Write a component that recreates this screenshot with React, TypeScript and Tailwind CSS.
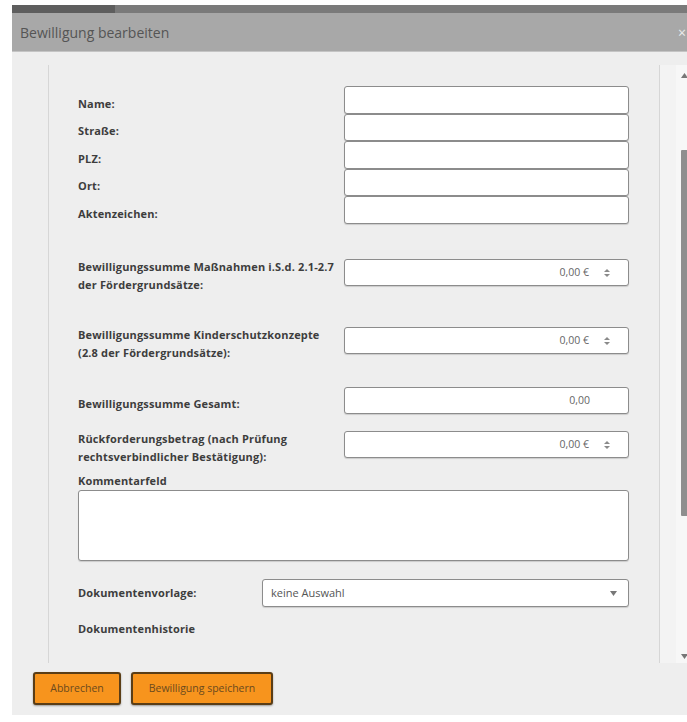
import { ReactNode } from "react";

function Spinner() {
  return (
    <svg width="8" height="12" viewBox="0 0 8 12" className="shrink-0">
      <path d="M1 5 L4 2 L7 5 Z" fill="#8a8a8a" />
      <path d="M1 7 L4 10 L7 7 Z" fill="#8a8a8a" />
    </svg>
  );
}

function TextInput({ h = "h-[28px]" }: { h?: string }) {
  return <div className={`w-[285px] ${h} bg-white border border-[#8c8c8c] rounded-[3px] shadow-[0_1px_1px_rgba(0,0,0,0.15)]`} />;
}

function MoneyInput({ value, spinner = true }: { value: string; spinner?: boolean }) {
  return (
    <div className="w-[285px] h-[27px] bg-white border border-[#8c8c8c] rounded-[3px] shadow-[0_1px_1px_rgba(0,0,0,0.15)] flex items-center justify-end pr-[17px] gap-[14px]">
      <span className={`text-[10.5px] text-[#666] ${spinner ? "" : "mr-[21px]"}`}>{value}</span>
      {spinner && <Spinner />}
    </div>
  );
}

function Row({ label, children, className = "" }: { label: ReactNode; children: ReactNode; className?: string }) {
  return (
    <div className={`flex items-center ${className}`}>
      <div className="w-[266px] pt-[7px] text-[11px] leading-[18px] font-bold tracking-[0.15px] text-[#3d3d3d]">{label}</div>
      {children}
    </div>
  );
}

export default function App() {
  return (
    <div className="w-[687px] h-[722px] bg-white overflow-hidden pt-[5px] pl-[12px] font-['Open_Sans',sans-serif]">
      <div className="w-[682px] h-[710px] flex flex-col bg-[#eeeeee]">
        {/* top strip */}
        <div className="h-[8px] flex shrink-0">
          <div className="w-[103px] bg-[#5e5e5e]" />
          <div className="flex-1 bg-[#7a7a7a]" />
        </div>
        {/* title bar */}
        <div className="h-[39px] shrink-0 bg-[#a8a8a8] border-b border-[#c4c4c4] flex items-center justify-between pl-[8px] pr-[8px]">
          <span className="text-[14px] text-[#555]">Bewilligung bearbeiten</span>
          <span className="text-[14px] text-[#ececec]">×</span>
        </div>

        {/* body */}
        <div className="flex pt-[13px] h-[611px] shrink-0">
          <div className="w-[36px] shrink-0" />
          <div className="w-[612px] shrink-0 border-l border-r border-[#d6d6d6] pl-[29px] pt-[21px] overflow-hidden">
            <div className="flex flex-col">
              <Row label="Name:">
                <TextInput />
              </Row>
              <Row label="Straße:">
                <TextInput h="h-[27px]" />
              </Row>
              <Row label="PLZ:">
                <TextInput />
              </Row>
              <Row label="Ort:">
                <TextInput h="h-[27px]" />
              </Row>
              <Row label="Aktenzeichen:">
                <TextInput />
              </Row>
            </div>

            <Row className="mt-[27px]" label={<>Bewilligungssumme Maßnahmen i.S.d. 2.1-2.7<br />der Fördergrundsätze:</>}>
              <MoneyInput value="0,00 €" />
            </Row>
            <Row className="mt-[25px]" label={<>Bewilligungssumme Kinderschutzkonzepte<br />(2.8 der Fördergrundsätze):</>}>
              <MoneyInput value="0,00 €" />
            </Row>
            <Row className="mt-[25px]" label="Bewilligungssumme Gesamt:">
              <MoneyInput value="0,00" spinner={false} />
            </Row>
            <Row className="mt-[9px]" label={<>Rückforderungsbetrag (nach Prüfung<br />rechtsverbindlicher Bestätigung):</>}>
              <MoneyInput value="0,00 €" />
            </Row>

            <div className="mt-[8px] text-[11px] leading-[14px] font-bold tracking-[0.15px] text-[#3d3d3d]">Kommentarfeld</div>
            <div className="mt-[2px] w-[551px] h-[71px] bg-white border border-[#8c8c8c] rounded-[3px] shadow-[0_1px_1px_rgba(0,0,0,0.15)]" />

            <div className="mt-[18px] flex items-center">
              <div className="w-[184px] text-[11px] font-bold tracking-[0.15px] text-[#3d3d3d]">Dokumentenvorlage:</div>
              <div className="w-[367px] h-[28px] bg-white border border-[#8c8c8c] rounded-[3px] shadow-[0_1px_1px_rgba(0,0,0,0.15)] flex items-center justify-between pl-[8px] pr-[11px]">
                <span className="text-[11px] text-[#555]">keine Auswahl</span>
                <svg width="7" height="5" viewBox="0 0 7 5">
                  <path d="M0 0 L7 0 L3.5 5 Z" fill="#777" />
                </svg>
              </div>
            </div>

            <div className="mt-[14px] text-[11px] font-bold tracking-[0.15px] text-[#3d3d3d]">Dokumentenhistorie</div>
          </div>

          {/* scrollbar */}
          <div className="w-[16px] shrink-0 bg-[#f3f3f3]" />
          <div className="w-[17px] shrink-0 bg-[#f7f7f7] flex flex-col items-center pt-[8px] pb-[4px]">
            <svg width="7" height="5" viewBox="0 0 7 5">
              <path d="M0 5 L7 5 L3.5 0 Z" fill="#777" />
            </svg>
            <div className="mt-[72px] w-[8px] h-[366px] bg-[#8e8e8e] rounded-[1px]" />
            <div className="flex-1" />
            <svg width="7" height="5" viewBox="0 0 7 5">
              <path d="M0 0 L7 0 L3.5 5 Z" fill="#777" />
            </svg>
          </div>
        </div>

        {/* footer buttons */}
        <div className="flex gap-[10px] pl-[21px] pt-[9px]">
          <button className="w-[88px] h-[33px] bg-[#f7941d] border-2 border-[#5a3d16] rounded-[3px] shadow-[0_1px_2px_rgba(0,0,0,0.35)] text-[10.5px] text-[#6b4a1e]">
            Abbrechen
          </button>
          <button className="w-[142px] h-[33px] bg-[#f7941d] border-2 border-[#5a3d16] rounded-[3px] shadow-[0_1px_2px_rgba(0,0,0,0.35)] text-[10.5px] text-[#6b4a1e]">
            Bewilligung speichern
          </button>
        </div>
      </div>
    </div>
  );
}
